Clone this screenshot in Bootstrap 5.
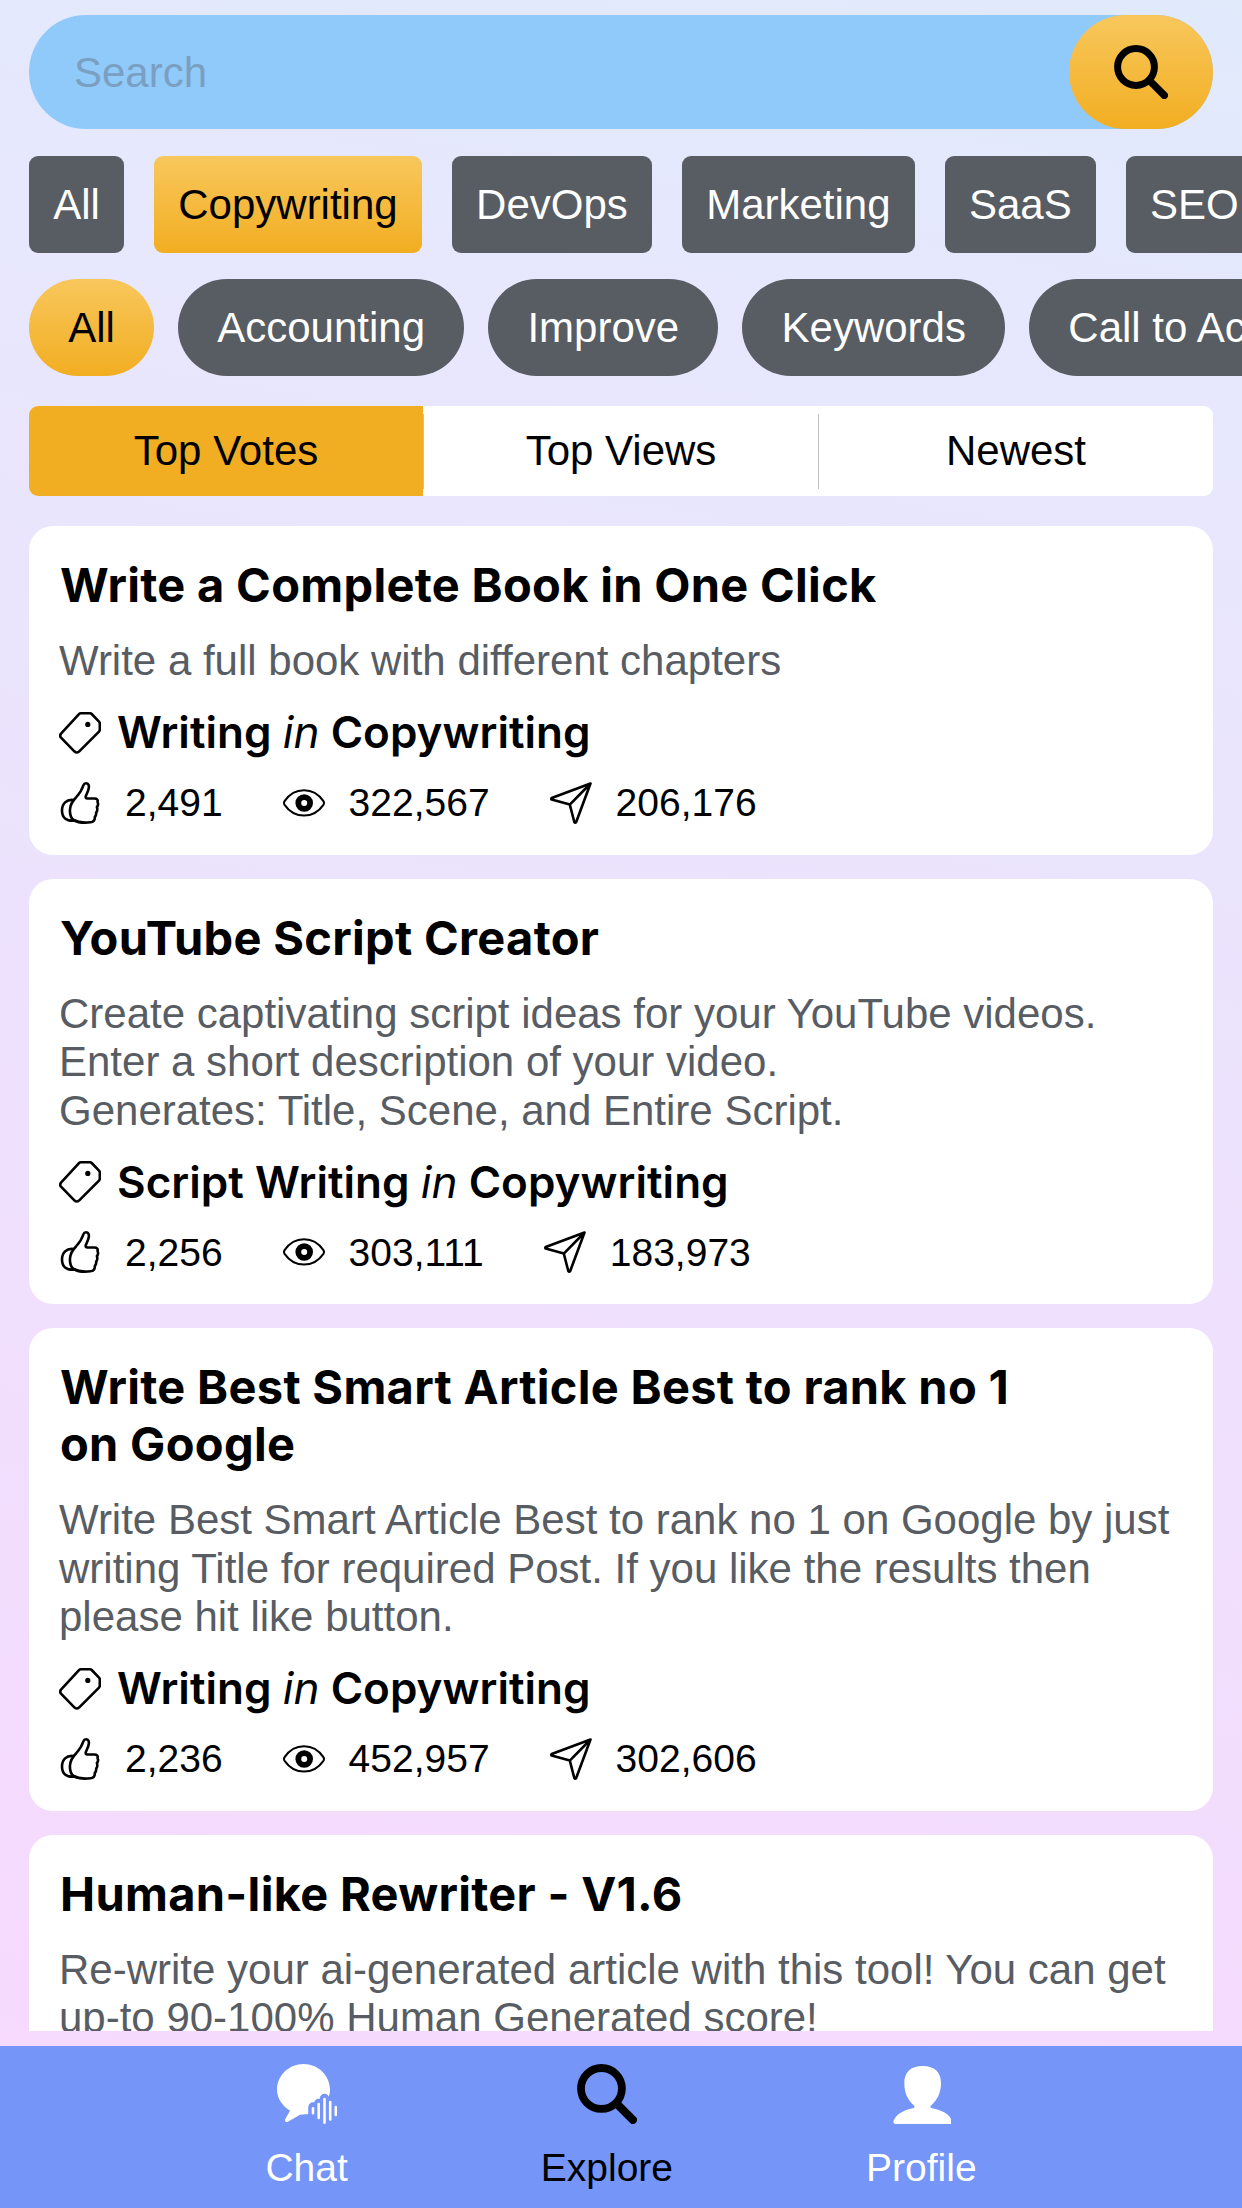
<!DOCTYPE html>
<html lang="en">
<head>
<meta charset="utf-8">
<title>Explore prompts</title>
<link href="https://cdn.jsdelivr.net/npm/bootstrap@5.3.0/dist/css/bootstrap.min.css" rel="stylesheet">
<style>
  body { font-family: "Liberation Sans", Arial, sans-serif; font-size: 42px; line-height: 48.5px; color: #000; }
  .app { width: 1242px; height: 2208px; background: linear-gradient(190deg, #e0eafb 0%, #e6e8fd 14%, #f7d9fd 96%); }
  .main-area { padding: 15px 29px 0; margin-bottom: 15px; min-height: 0; }
  .search-bar { height: 114px; border-radius: 57px; background: #90cafb; margin-bottom: 27px; }
  .search-bar .form-control { padding: 0 0 0 45px; font-size: 42px; color: #000; box-shadow: none; }
  .search-bar .form-control::placeholder { color: #7a9fc0; opacity: 1; }
  .amber { background: linear-gradient(#f8c75c, #f2ae22); }
  .search-btn { width: 144px; height: 114px; border-radius: 57px; }
  .chip-row { margin-right: -29px; gap: 30px; margin-bottom: 26px; }
  .chip { height: 97px; padding: 2px 24.2px 0; font-size: 42px; color: #fff; border: 0; border-radius: 9px; background-color: #585c63; display: flex; align-items: center; flex: none; white-space: nowrap; }
  .chip.amber { color: #000; }
  .chip-row.pills { gap: 24px; margin-bottom: 0; }
  .chip-row.pills .chip { border-radius: 48.5px; padding: 2px 39.2px 0; }
  .sort-tabs { height: 90px; margin: 30px 0; border-radius: 9px; }
  .sort-tabs .nav-link { padding: 0; line-height: 90px; color: #000; border-radius: 0; }
  .sort-tabs .nav-link.active { background: #f2ae22; color: #000; }
  .rule { width: 1px; height: 75px; background: #c0c0c2; flex: none; }
  .prompt { border: 0; border-radius: 24px; padding: 30px 30px 29.5px; flex: none; color: #000; }
  .prompt h2 { font: 700 47px/57px Inter, sans-serif; letter-spacing: .3px; margin: 0 0 24px 1px; }
  .prompt p { color: #585c63; margin: 0 0 20.500px; }
  .topic { font: 600 44px/53px Inter, sans-serif; letter-spacing: .04px; height: 53px; margin-bottom: 21px; }
  .topic svg { margin-right: 16px; }
  .topic em { font-weight: 400; }
  .stats { font-size: 39px; line-height: 45px; gap: 60px; }
  .stats span { gap: 24px; }
  .ico { width: 42px; height: 42px; fill: none; stroke: #000; stroke-width: 2.6; stroke-linejoin: round; stroke-linecap: round; flex: none; overflow: visible; }
  .bottom-bar { height: 162px; background: #7595f8; gap: 193px; padding-top: 18px; font-size: 39px; line-height: 45px; }
  .bottom-bar a { gap: 21px; color: #fff; text-decoration: none; }
  .bottom-bar a.current { color: #000; }
  .bottom-bar svg { width: 60px; height: 60px; }
</style>
</head>
<body>
<svg class="d-none">
  <symbol id="find" viewBox="0 0 54 54"><circle cx="22" cy="22" r="18.400" fill="none" stroke="#000" stroke-width="7"/><path d="M35.500 35.500L50.300 50.300" stroke="#000" stroke-width="7.400" stroke-linecap="round"/></symbol>
  <symbol id="tag" viewBox="0 0 42 42"><path d="M21.800 1.300H31Q32 1.300 32.700 2L40 9.600Q40.800 10.400 40.800 11.500V17.600Q40.800 18.800 40 19.600L20 39.600Q17.700 41.400 15.600 39.600L2 25.600Q.4 23.700 2 21.600L20 2.200Q20.800 1.300 21.800 1.300Z"/><circle cx="28.800" cy="12.400" r="2.600" fill="#000" stroke="none"/></symbol>
  <symbol id="like" viewBox="0 0 42 42"><path d="M24.300 3.500C25 1.800 25.800 1.300 27 1.300C29.300 1.300 30.200 3.200 29.800 5.800C29.400 9 27.600 12 26.800 14.200C26.400 15.600 27 16.500 28.500 16.500H35.500C38 16.500 39.200 18 38.500 20C39.500 22 39 23.800 37.900 25C38.700 27.500 38.200 29.300 37.200 30.300C37.400 32.500 36.800 34 35.800 35C36 38.500 34.600 40 31.500 40.300C26 41 19 40.600 14.500 38C11.500 35.500 10.700 31.500 11 27.500C11.400 22.500 13.800 18.700 17 15.500C20 12.200 22.800 8.500 24.300 3.500Z"/><path d="M14.300 18C7.500 17.300 3 21.500 3 28.500C3 35.500 7 39.200 15.500 38.600"/></symbol>
  <symbol id="eye" viewBox="0 0 42 42"><path d="M1.600 19.100C6.500 11.800 13.500 8.200 21 8.200S35.500 11.800 40.400 19.100Q41.600 21 40.400 22.900C35.500 30 28.500 33.600 21 33.600S6.500 30 1.600 22.900Q.4 21 1.600 19.100Z" stroke-width="2"/><circle cx="21.200" cy="21" r="5.900" stroke-width="5.800"/></symbol>
  <symbol id="send" viewBox="0 0 42 42"><path d="M40.500 1.500L1.700 16Q.8 16.900 1.700 17.600L19.800 22.600L24.300 40Q25.200 41.400 26.200 40L40.500 1.500L19.800 22.600"/></symbol>
</svg>
<div class="app d-flex flex-column overflow-hidden">
  <main class="main-area d-flex flex-column flex-grow-1 overflow-hidden">
    <form class="search-bar d-flex flex-shrink-0">
      <input class="form-control bg-transparent border-0" type="text" placeholder="Search">
      <button class="search-btn amber btn border-0 p-0 flex-shrink-0 d-flex align-items-center justify-content-center" type="button" aria-label="Search"><svg width="54" height="54"><use href="#find"/></svg></button>
    </form>
    <div class="chip-row d-flex flex-shrink-0">
      <button class="chip">All</button><button class="chip amber">Copywriting</button><button class="chip">DevOps</button><button class="chip">Marketing</button><button class="chip">SaaS</button><button class="chip">SEO</button>
    </div>
    <div class="chip-row pills d-flex flex-shrink-0">
      <button class="chip amber">All</button><button class="chip">Accounting</button><button class="chip">Improve</button><button class="chip">Keywords</button><button class="chip">Call to Action</button>
    </div>
    <nav class="sort-tabs nav nav-pills nav-justified flex-nowrap flex-shrink-0 align-items-center bg-white overflow-hidden">
      <a class="nav-link active">Top Votes</a><span class="rule"></span><a class="nav-link">Top Views</a><span class="rule"></span><a class="nav-link">Newest</a>
    </nav>
    <section class="d-flex flex-column gap-4 flex-shrink-0">
      <article class="prompt card">
        <h2>Write a Complete Book in One Click</h2>
        <p>Write a full book with different chapters</p>
        <div class="topic d-flex align-items-center"><svg class="ico"><use href="#tag"/></svg><div>Writing <em>in</em> Copywriting</div></div>
        <div class="stats d-flex">
          <span class="d-flex align-items-center"><svg class="ico"><use href="#like"/></svg>2,491</span>
          <span class="d-flex align-items-center"><svg class="ico"><use href="#eye"/></svg>322,567</span>
          <span class="d-flex align-items-center"><svg class="ico"><use href="#send"/></svg>206,176</span>
        </div>
      </article>
      <article class="prompt card">
        <h2>YouTube Script Creator</h2>
        <p>Create captivating script ideas for your YouTube videos.<br>Enter a short description of your video.<br>Generates: Title, Scene, and Entire Script.</p>
        <div class="topic d-flex align-items-center"><svg class="ico"><use href="#tag"/></svg><div>Script Writing <em>in</em> Copywriting</div></div>
        <div class="stats d-flex">
          <span class="d-flex align-items-center"><svg class="ico"><use href="#like"/></svg>2,256</span>
          <span class="d-flex align-items-center"><svg class="ico"><use href="#eye"/></svg>303,111</span>
          <span class="d-flex align-items-center"><svg class="ico"><use href="#send"/></svg>183,973</span>
        </div>
      </article>
      <article class="prompt card">
        <h2>Write Best Smart Article Best to rank no 1<br>on Google</h2>
        <p>Write Best Smart Article Best to rank no 1 on Google by just<br>writing Title for required Post. If you like the results then<br>please hit like button.</p>
        <div class="topic d-flex align-items-center"><svg class="ico"><use href="#tag"/></svg><div>Writing <em>in</em> Copywriting</div></div>
        <div class="stats d-flex">
          <span class="d-flex align-items-center"><svg class="ico"><use href="#like"/></svg>2,236</span>
          <span class="d-flex align-items-center"><svg class="ico"><use href="#eye"/></svg>452,957</span>
          <span class="d-flex align-items-center"><svg class="ico"><use href="#send"/></svg>302,606</span>
        </div>
      </article>
      <article class="prompt card">
        <h2>Human-like Rewriter - V1.6</h2>
        <p>Re-write your ai-generated article with this tool! You can get<br>up-to 90-100% Human Generated score!</p>
      </article>
    </section>
  </main>
  <nav class="bottom-bar d-flex justify-content-center flex-shrink-0">
    <a class="d-flex flex-column align-items-center"><svg viewBox="0 0 60 60"><path fill="#fff" d="M26.500 0C41 0 53 11.500 53 25.500S41 50.500 26.500 50.500Q24.500 50.500 23 50.700L11 57.700Q7.500 59 8 55.500L13 46.700C5.500 42 0 34.500 0 25.500C0 11.500 12 0 26.500 0Z"/><g stroke-linecap="round"><path d="M36 43V50M41.700 39.500V54.500M47.500 34.500V59M53.200 37.500V56M58.800 43V51.500" stroke="#7595f8" stroke-width="9.500"/><path d="M36 44.200V49.200M41.700 40V54M47.500 35V58.700M53.200 38V55.500M58.800 43V51" stroke="#fff" stroke-width="2.600"/></g></svg>Chat</a>
    <a class="current d-flex flex-column align-items-center"><svg><use href="#find"/></svg>Explore</a>
    <a class="d-flex flex-column align-items-center"><svg viewBox="0 0 60 60"><path fill="#fff" d="M31.500 2C44 2 50 8.500 50 19C50 29 46 36.500 40 41.500Q38.300 43.500 41 44.200C51 46 58 50 60 55V60H5Q1.800 60 2.500 57C5 50.500 12 46 22 44.200Q24.500 43.500 23 41.500C17 36.500 13.300 29 13.300 19C13.300 8.500 19.500 2 31.500 2Z"/></svg>Profile</a>
  </nav>
</div>
<script src="https://cdn.jsdelivr.net/npm/bootstrap@5.3.0/dist/js/bootstrap.bundle.min.js"></script>
</body>
</html>
